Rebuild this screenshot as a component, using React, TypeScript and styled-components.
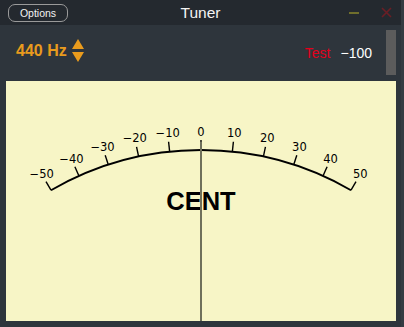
import styled, { createGlobalStyle } from "styled-components";

const GlobalStyle = createGlobalStyle`
  html, body {
    margin: 0;
    padding: 0;
    background: #2e353c;
  }
`;

const Window = styled.div`
  width: 401px;
  height: 327px;
  display: flex;
  flex-direction: column;
  background: #2e353c;
  border-right: 3px solid #343b42;
  font-family: "Liberation Sans", Arial, sans-serif;
  overflow: hidden;
`;

const TitleBar = styled.div`
  height: 25px;
  display: flex;
  align-items: center;
  padding: 0 0 0 8px;
  background: #24292f;
  position: relative;
`;

const OptionsButton = styled.button`
  width: 60px;
  height: 18px;
  padding: 0;
  border: 1px solid #9a9a9a;
  border-radius: 7px;
  background: transparent;
  color: #f2f2f2;
  font-family: "Liberation Sans", Arial, sans-serif;
  font-size: 10.5px;
  line-height: 16px;
  margin-top: 1px;
`;

const Title = styled.div`
  flex: 1;
  text-align: center;
  color: #f4f4f4;
  font-size: 15.5px;
  margin-left: -8px;
  padding-right: 60px;
`;

const WindowControls = styled.div`
  position: absolute;
  right: 9px;
  top: 7px;
  display: flex;
  align-items: center;
  gap: 22px;
`;

const MinimizeBar = styled.span`
  width: 10px;
  height: 2px;
  background: #6f6e2c;
`;

const Header = styled.div`
  height: 56px;
  display: flex;
  align-items: center;
  padding: 0 5px 0 16px;
`;

const Frequency = styled.div`
  display: flex;
  align-items: center;
  gap: 5px;
  margin-top: -5px;
  color: #e99b1d;
  font-weight: bold;
  font-size: 16px;
`;

const Stepper = styled.div`
  display: flex;
  flex-direction: column;
  gap: 3px;
`;

const Spacer = styled.div`
  flex: 1;
`;

const Reading = styled.span<{ $tone: string; $gap?: number }>`
  color: ${(p) => p.$tone};
  font-size: 14px;
  margin-left: ${(p) => p.$gap ?? 0}px;
`;

const ScrollThumb = styled.div`
  align-self: flex-start;
  margin-top: 5px;
  margin-left: 14px;
  width: 10px;
  height: 45px;
  background: #5c5c5c;
`;

const MeterPanel = styled.div`
  height: 240px;
  margin: 0 5px 0 6px;
  background: #f7f5c6;
`;

const MeterSvg = styled.svg`
  display: block;
  width: 390px;
  height: 240px;
`;

const CX = 195;
const CY = 369;
const R = 300;
const DEG = Math.PI / 180;

function polar(r: number, deg: number) {
  return [CX + r * Math.sin(deg * DEG), CY - r * Math.cos(deg * DEG)];
}

const marks = [-50, -40, -30, -20, -10, 0, 10, 20, 30, 40, 50];

function Meter() {
  const [sx, sy] = polar(R, -30);
  const [ex, ey] = polar(R, 30);
  return (
    <MeterSvg viewBox="0 0 390 240">
      <path
        d={`M ${sx} ${sy} A ${R} ${R} 0 0 1 ${ex} ${ey}`}
        fill="none"
        stroke="#000"
        strokeWidth={1.8}
      />
      {marks.map((m) => {
        const a = m * 0.6;
        const [x1, y1] = polar(R, a);
        const [x2, y2] = polar(R + 10, a);
        const [lx, ly] = polar(R + 18.5, a);
        return (
          <g key={m}>
            <line x1={x1} y1={y1} x2={x2} y2={y2} stroke="#000" strokeWidth={1.4} />
            <text
              x={lx}
              y={ly + 4}
              textAnchor="middle"
              fontFamily="'DejaVu Sans', sans-serif"
              fontSize={11.5}
              fill="#000"
            >
              {m < 0 ? `\u2212${-m}` : m}
            </text>
          </g>
        );
      })}
      <text
        x={CX}
        y={129}
        textAnchor="middle"
        fontFamily="'Liberation Sans', Arial, sans-serif"
        fontWeight="bold"
        fontSize={25.5}
        fill="#000"
      >
        CENT
      </text>
      <line x1={CX} y1={61} x2={CX} y2={240} stroke="#6f705a" strokeWidth={2} />
    </MeterSvg>
  );
}

export default function App() {
  return (
    <>
      <GlobalStyle />
      <Window>
        <TitleBar>
          <OptionsButton>Options</OptionsButton>
          <Title>Tuner</Title>
          <WindowControls>
            <MinimizeBar />
            <svg width="11" height="11" viewBox="0 0 11 11">
              <path d="M1 1 L10 10 M10 1 L1 10" stroke="#6b1e25" strokeWidth="1.6" />
            </svg>
          </WindowControls>
        </TitleBar>
        <Header>
          <Frequency>
            440 Hz
            <Stepper>
              <svg width="12" height="10" viewBox="0 0 12 10">
                <path d="M6 0 L12 10 L0 10 Z" fill="#e99b1d" />
              </svg>
              <svg width="12" height="10" viewBox="0 0 12 10">
                <path d="M0 0 L12 0 L6 10 Z" fill="#e99b1d" />
              </svg>
            </Stepper>
          </Frequency>
          <Spacer />
          <Reading $tone="#e4001b">Test</Reading>
          <Reading $tone="#ffffff" $gap={10}>
            {"\u2212100"}
          </Reading>
          <ScrollThumb />
        </Header>
        <MeterPanel>
          <Meter />
        </MeterPanel>
      </Window>
    </>
  );
}
